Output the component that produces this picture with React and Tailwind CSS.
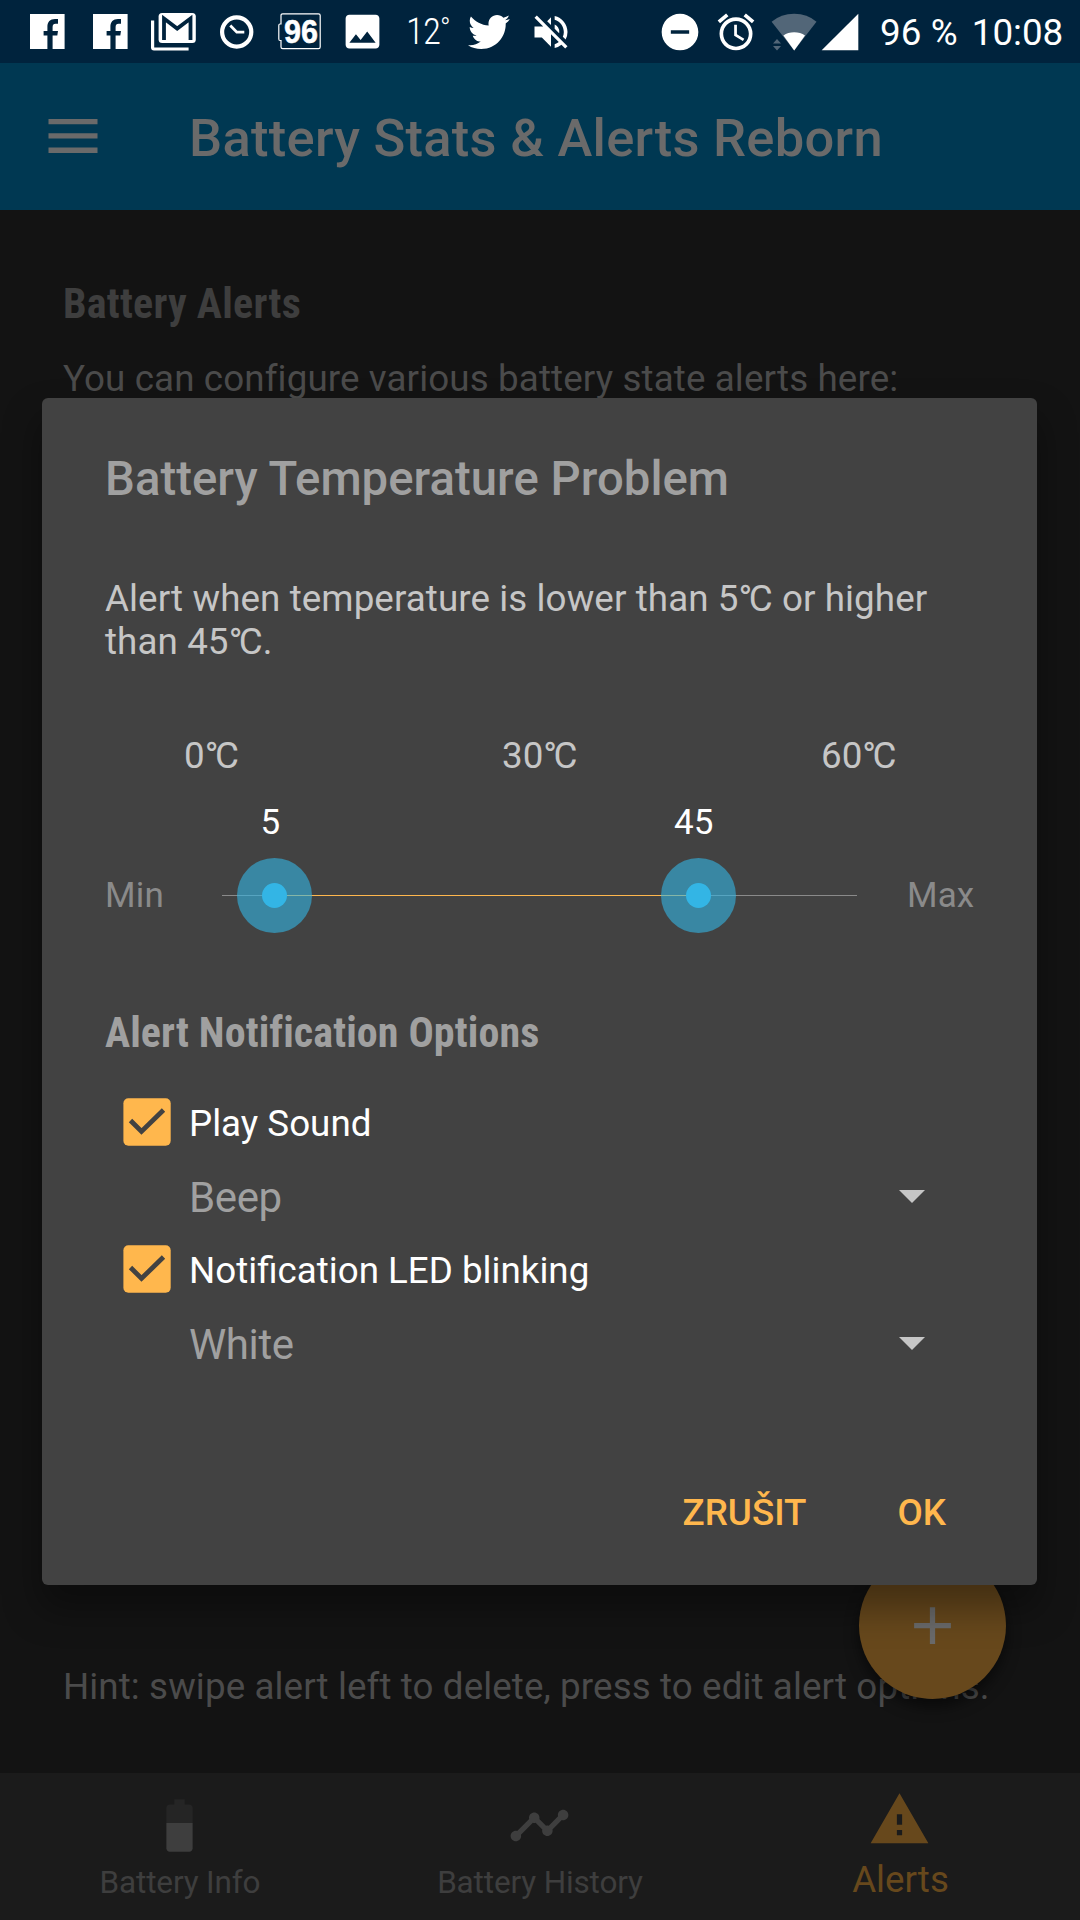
import React from 'react';
import { FaTwitter } from 'react-icons/fa';
import { MdAdd, MdAlarm, MdDoNotDisturbOn, MdImage, MdSignalCellular4Bar, MdTimeline, MdVolumeOff, MdWarning } from 'react-icons/md';

const RANGE_MAX = 60;

function FacebookIcon({ className }) {
    return (
        <svg className={className} width="35" height="35" viewBox="0 0 35 35" fill="currentColor">
            <path d="M0 0H34.6V35H22.6V21.6H27.3L28 17H22.6V13C22.6 11 23.6 9.8 25.6 9.8H28V5H25C20 5 17.4 8 17.4 12.6V17H13.6V21.6H17.4V35H0Z" />
        </svg>
    );
}

function GmailIcon({ className }) {
    return (
        <svg className={className} width="45" height="38" viewBox="0 0 45 38">
            <path d="M1.6 7.5V34.6Q1.6 36 3 36H37.6" fill="none" stroke="currentColor" strokeWidth="3.2" />
            <rect x="7.6" y="0" width="37.2" height="30" rx="3.5" fill="currentColor" />
            <path d="M13 27V5.5L26.2 15.5L39.5 5.5V27" fill="none" stroke="#00233d" strokeWidth="3.8" />
        </svg>
    );
}

function ClockIcon({ className }) {
    return (
        <svg className={className} width="34" height="34" viewBox="0 0 34 34" fill="none" stroke="currentColor">
            <circle cx="16.7" cy="17" r="14.6" strokeWidth="4.2" />
            <path d="M10.3 10.5L16.8 17.2H24.3" strokeWidth="2.8" />
        </svg>
    );
}

function BatteryPercentIcon({ className }) {
    return (
        <svg className={className} width="43" height="38" viewBox="0 0 43 38">
            <path d="M3 27.5H2Q.8 27.5.8 26V12.5Q.8 11 2 11H3V2.5Q3 .8 4.7.8H40.5Q42.2.8 42.2 2.5V34Q42.2 35.7 40.5 35.7H4.7Q3 35.7 3 34Z" fill="none" stroke="currentColor" strokeWidth="1.2" />
            <text x="6" y="29.7" textLength="34" lengthAdjust="spacingAndGlyphs" fill="currentColor" stroke="currentColor" strokeWidth=".5" fontFamily="Liberation Sans, sans-serif" fontSize="32.5" fontWeight="700">96</text>
        </svg>
    );
}

function WifiIcon({ className }) {
    return (
        <svg className={className} width="46" height="38" viewBox="0 0 46 38">
            <path d="M23.2 37.5L.6 8.8Q10 .8 23.2.8T45.5 8.8Z" fill="#526678" />
            <path d="M23.2 37.5L12.4 22.5Q17 19.3 23.2 19.3T34 22.5Z" fill="#fff" />
            <path d="M2 30.5L6 26L10 30.5ZM2 33L6 37.5L10 33Z" fill="#526678" />
        </svg>
    );
}

function StatusBar() {
    return (
        <div className="flex h-[63px] items-center bg-[#00233d] pl-[30px] text-white">
            <FacebookIcon />
            <FacebookIcon className="ml-7" />
            <GmailIcon className="ml-[23px]" />
            <ClockIcon className="ml-6" />
            <BatteryPercentIcon className="ml-[24px]" />
            <MdImage size={45} className="ml-[19px]" />
            <div className="ml-[21px] flex w-[37px] items-start font-['Roboto_Condensed',Roboto,sans-serif] font-light">
                <span className="text-[37px] leading-[43px] tracking-[-1px]">12</span>
                <span className="text-[28px] leading-[37px]">°</span>
            </div>
            <FaTwitter size={42} className="ml-[25px]" />
            <MdVolumeOff size={44} className="ml-[19px]" />
            <div className="ml-[85px] flex items-center">
                <MdDoNotDisturbOn size={44} />
                <MdAlarm size={44} className="ml-3" />
                <WifiIcon className="ml-[13px]" />
                <MdSignalCellular4Bar size={44} className="ml-px" />
            </div>
            <span className="ml-[18px] mt-[3px] whitespace-pre tracking-[0.1px]">96 %</span>
            <span className="ml-[14px] mt-[3px]">10:08</span>
        </div>
    );
}

function NavItem({ icon, label, active }) {
    return (
        <div className={`flex flex-1 flex-col items-center ${active ? 'pt-[15px] text-[#67481c]' : 'pt-[21px] text-[#3e3e3e]'}`}>
            <div className="mr-[2px]">{icon}</div>
            <span className={active ? 'ml-px mt-[7px] leading-[43px]' : 'mt-[7px] text-[31.5px] leading-[37px] tracking-[-0.15px]'}>{label}</span>
        </div>
    );
}

function BatteryIcon() {
    return (
        <svg width="63" height="63" viewBox="0 0 24 24">
            <path d="M17 5.3C17 4.6 16.4 4 15.7 4H14V2H10V4H8.3C7.6 4 7 4.6 7 5.3V11H17V5.3Z" fill="#252525" />
            <path d="M7 11V20.7C7 21.4 7.6 22 8.3 22H15.7C16.4 22 17 21.4 17 20.7V11Z" fill="#3e3e3e" />
        </svg>
    );
}

// Temperature with a tightly set unit
function Celsius({ value }) {
    return (
        <span className="whitespace-nowrap">
            {value}<span className="mr-[3.5px] tracking-[-3.5px]">°C</span>
        </span>
    );
}

// Range slider thumb with its value above the track
function Thumb({ value }) {
    return (
        <div className="absolute top-0 h-px w-0" style={{ left: `${(value / RANGE_MAX) * 100}%` }}>
            <div className="absolute -left-[54.5px] -top-[93px] w-[100px] text-center text-[35px] leading-[41px] text-white">{value}</div>
            <div className="absolute -left-[37.5px] -top-[37px] flex size-[75px] items-center justify-center rounded-full bg-[#33b5e5]/60">
                <div className="size-[25px] rounded-full bg-[#33b5e5]" />
            </div>
        </div>
    );
}

function RangeSlider({ low, high }) {
    return (
        <div className="flex h-[42px] items-center text-[35px] leading-[41px] text-[#8a8a8a]">
            <span className="w-[117px] shrink-0 tracking-[0.2px]">Min</span>
            <div className="relative h-px w-[635px] shrink-0 bg-[#8a8a8a]">
                <div
                    className="h-px bg-[#ffb74d]"
                    style={{ marginLeft: `${(low / RANGE_MAX) * 100}%`, width: `${((high - low) / RANGE_MAX) * 100}%` }}
                />
                <Thumb value={low} />
                <Thumb value={high} />
            </div>
            <span className="ml-[50px] tracking-[0.1px]">Max</span>
        </div>
    );
}

function CheckOption({ label, choice }) {
    return (
        <div className="h-[147px]">
            <div className="flex h-[48px] items-center pl-[18px]">
                <svg width="48" height="48" viewBox="0 0 48 48">
                    <rect x=".4" y=".3" width="47.3" height="47.4" rx="5" fill="#ffb74d" />
                    <path d="M7.5 22.5L18.5 33.5L40.5 12" fill="none" stroke="#424242" strokeWidth="4.8" />
                </svg>
                <span className="ml-[18px] mt-[3px] leading-[43px] text-white">{label}</span>
            </div>
            <div className="mt-[27px] flex items-center justify-between pl-[84px] pr-[49.5px] text-[42px] leading-[49px] tracking-[-0.4px] text-[#a0a0a0]">
                <span>{choice}</span>
                <svg width="26" height="13" viewBox="0 0 26 13" className="mb-[2px]" fill="#c6c6c6">
                    <path d="M0 0H26L13 13Z" />
                </svg>
            </div>
        </div>
    );
}

function AlertDialog() {
    return (
        <div className="absolute left-[42px] top-[398px] flex h-[1187px] w-[995px] flex-col rounded-[6px] bg-[#424242] px-[63px] pt-[54px] shadow-[0_22px_36px_2px_rgba(0,0,0,0.35)]">
            <h2 className="text-[47.25px] font-medium leading-[55px] tracking-[0.05px] text-[#a0a0a0]">Battery Temperature Problem</h2>
            <p className="mt-[70px] leading-[43px] tracking-[0.09px] text-[#c6c6c6]">
                Alert when temperature is lower than <Celsius value={5} /> or higher
                <br />
                than <Celsius value={45} />.
            </p>

            <div className="mt-[71px] flex pl-[79px] leading-[43px] text-[#c6c6c6]">
                <div className="w-[318px]"><Celsius value={0} /></div>
                <div className="w-[319px]"><Celsius value={30} /></div>
                <div><Celsius value={60} /></div>
            </div>
            <div className="mt-[97px]">
                <RangeSlider low={5} high={45} />
            </div>

            <h3 className="mt-[92px] font-['Roboto_Condensed',Roboto,sans-serif] text-[42px] font-bold leading-[49px] tracking-[0.1px] text-[#a0a0a0]">
                Alert Notification Options
            </h3>
            <div className="mt-[41px]">
                <CheckOption label="Play Sound" choice="Beep" />
                <CheckOption label="Notification LED blinking" choice="White" />
            </div>

            <div className="mt-[99px] flex justify-end gap-[91px] pr-[28px] font-medium leading-[43px] text-[#ffb74d]">
                <button>ZRUŠIT</button>
                <button>OK</button>
            </div>
        </div>
    );
}

export default function App() {
    return (
        <div className="relative flex h-[1920px] w-[1080px] flex-col overflow-hidden bg-[#131313] font-[Roboto,sans-serif] text-[36.75px]">
            <StatusBar />

            <header className="flex h-[147px] items-center bg-[#003852] pl-[48px] text-[#6a6a6a]">
                <svg className="mb-[2px]" width="50" height="34" viewBox="0 0 50 34" fill="currentColor">
                    <path d="M.5 0H49.5V5.3H.5ZM.5 14.3H49.5V19.6H.5ZM.5 28.6H49.5V33.9H.5Z" />
                </svg>
                <h1 className="ml-[91px] mt-[2px] text-[52.5px] font-medium leading-[62px] tracking-[0.27px]">Battery Stats & Alerts Reborn</h1>
            </header>

            <main className="flex flex-1 flex-col px-[63px] pt-[69px] text-[#4b4b4b]">
                <h3 className="font-['Roboto_Condensed',Roboto,sans-serif] text-[42px] font-bold leading-[49px] tracking-[0.25px] text-[#3e3e3e]">Battery Alerts</h3>
                <p className="mt-[29px] leading-[43px] tracking-[0.12px]">You can configure various battery state alerts here:</p>
                <p className="mb-[65px] mt-auto whitespace-nowrap leading-[43px] tracking-[0.1px]">Hint: swipe alert left to delete, press to edit alert options.</p>
            </main>

            {/* Floating add button */}
            <div className="absolute left-[859px] top-[1552px] flex size-[147px] items-center justify-center rounded-full bg-[#67481c] text-[#6a6a6a] shadow-[0_8px_14px_rgba(0,0,0,0.5)]">
                <MdAdd size={63} />
            </div>

            <nav className="flex h-[147px] bg-[#1b1b1b]">
                <NavItem icon={<BatteryIcon />} label="Battery Info" />
                <NavItem icon={<MdTimeline size={63} />} label="Battery History" />
                <NavItem icon={<MdWarning size={63} />} label="Alerts" active />
            </nav>

            <AlertDialog />
        </div>
    );
}
